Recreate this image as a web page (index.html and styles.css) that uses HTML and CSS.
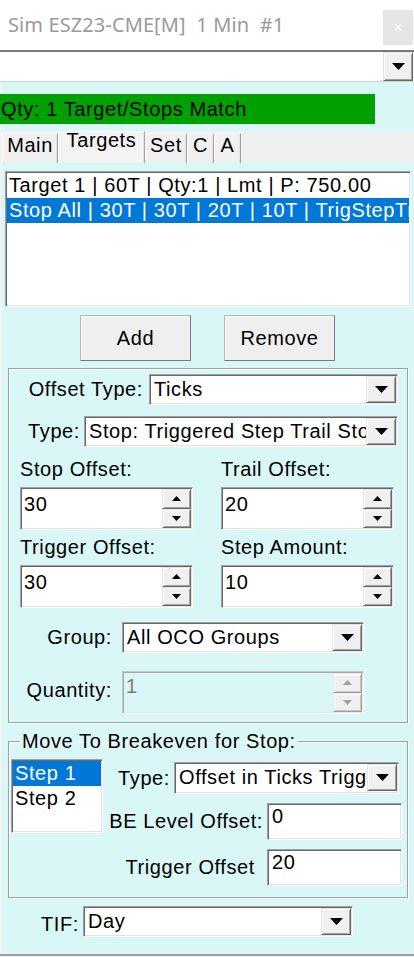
FILE: index.html
```html
<!DOCTYPE html>
<html>
<head>
<meta charset="utf-8">
<link rel="stylesheet" href="styles.css">
</head>
<body>
<div class="titlebar">
  <span class="title">Sim ESZ23-CME[M]&nbsp; 1 Min&nbsp; #1</span>
  <span class="close">×</span>
</div>
<div class="topbar">
  <span class="dd top-dd"><svg width="13" height="7" viewBox="0 0 13 7"><path d="M0 0H13L6.5 7Z"/></svg></span>
</div>
<div class="content">
  <div class="status">Qty: 1 Target/Stops Match</div>
  <div class="tabs">
    <span class="tab w-main">Main</span>
    <span class="tab active w-targets">Targets</span>
    <span class="tab w-set">Set</span>
    <span class="tab w-c">C</span>
    <span class="tab w-a">A</span>
  </div>
  <div class="listbox main-list">
    <div class="item">Target 1 | 60T | Qty:1 | Lmt | P: 750.00</div>
    <div class="item sel">Stop All | 30T | 30T | 20T | 10T | TrigStepTrail</div>
  </div>
  <div class="btnrow">
    <button class="btn btn-add">Add</button>
    <button class="btn btn-remove">Remove</button>
  </div>

  <div class="group g1">
    <div class="row row-offset">
      <span class="lbl lbl-offset">Offset Type:</span>
      <div class="combo c-offset"><span class="combo-val">Ticks</span><span class="dd"><svg width="13" height="7" viewBox="0 0 13 7"><path d="M0 0H13L6.5 7Z"/></svg></span></div>
    </div>
    <div class="row row-type">
      <span class="lbl lbl-type">Type:</span>
      <div class="combo c-type"><span class="combo-val">Stop: Triggered Step Trail Stop</span><span class="dd"><svg width="13" height="7" viewBox="0 0 13 7"><path d="M0 0H13L6.5 7Z"/></svg></span></div>
    </div>
    <div class="grid">
      <div class="cell">
        <div class="cell-lbl">Stop Offset:</div>
        <div class="spin"><span class="spin-val">30</span><span class="spin-btns"><span class="sb"><svg width="9" height="5" viewBox="0 0 9 5"><path d="M0 5H9L4.5 0Z"/></svg></span><span class="sb"><svg width="9" height="5" viewBox="0 0 9 5"><path d="M0 0H9L4.5 5Z"/></svg></span></span></div>
      </div>
      <div class="cell">
        <div class="cell-lbl">Trail Offset:</div>
        <div class="spin"><span class="spin-val">20</span><span class="spin-btns"><span class="sb"><svg width="9" height="5" viewBox="0 0 9 5"><path d="M0 5H9L4.5 0Z"/></svg></span><span class="sb"><svg width="9" height="5" viewBox="0 0 9 5"><path d="M0 0H9L4.5 5Z"/></svg></span></span></div>
      </div>
      <div class="cell">
        <div class="cell-lbl">Trigger Offset:</div>
        <div class="spin"><span class="spin-val">30</span><span class="spin-btns"><span class="sb"><svg width="9" height="5" viewBox="0 0 9 5"><path d="M0 5H9L4.5 0Z"/></svg></span><span class="sb"><svg width="9" height="5" viewBox="0 0 9 5"><path d="M0 0H9L4.5 5Z"/></svg></span></span></div>
      </div>
      <div class="cell">
        <div class="cell-lbl">Step Amount:</div>
        <div class="spin"><span class="spin-val">10</span><span class="spin-btns"><span class="sb"><svg width="9" height="5" viewBox="0 0 9 5"><path d="M0 5H9L4.5 0Z"/></svg></span><span class="sb"><svg width="9" height="5" viewBox="0 0 9 5"><path d="M0 0H9L4.5 5Z"/></svg></span></span></div>
      </div>
    </div>
    <div class="row row-group">
      <span class="lbl lbl-group">Group:</span>
      <div class="combo c-group"><span class="combo-val">All OCO Groups</span><span class="dd"><svg width="13" height="7" viewBox="0 0 13 7"><path d="M0 0H13L6.5 7Z"/></svg></span></div>
    </div>
    <div class="row row-qty">
      <span class="lbl lbl-qty">Quantity:</span>
      <div class="spin disabled c-qty"><span class="spin-val">1</span><span class="spin-btns"><span class="sb"><svg width="9" height="5" viewBox="0 0 9 5"><path d="M0 5H9L4.5 0Z"/></svg></span><span class="sb"><svg width="9" height="5" viewBox="0 0 9 5"><path d="M0 0H9L4.5 5Z"/></svg></span></span></div>
    </div>
  </div>

  <fieldset class="g2">
    <legend>Move To Breakeven for Stop:</legend>
    <div class="g2-body">
      <div class="listbox steps">
        <div class="item sel">Step 1</div>
        <div class="item">Step 2</div>
      </div>
      <div class="g2-right">
        <div class="r2 r2-type">
          <span class="lbl2">Type:</span>
          <div class="combo c-betype"><span class="combo-val">Offset in Ticks Trigger</span><span class="dd"><svg width="13" height="7" viewBox="0 0 13 7"><path d="M0 0H13L6.5 7Z"/></svg></span></div>
        </div>
        <div class="r2 r2-be">
          <span class="lbl2">BE Level Offset:</span>
          <div class="textbox">0</div>
        </div>
        <div class="r2 r2-trig">
          <span class="lbl2">Trigger Offset</span>
          <div class="textbox">20</div>
        </div>
      </div>
    </div>
  </fieldset>

  <div class="row row-tif">
    <span class="lbl lbl-tif">TIF:</span>
    <div class="combo c-tif"><span class="combo-val">Day</span><span class="dd"><svg width="13" height="7" viewBox="0 0 13 7"><path d="M0 0H13L6.5 7Z"/></svg></span></div>
  </div>
</div>
<div class="bottom"></div>
</body>
</html>
```
FILE: styles.css
```css
* { box-sizing: border-box; }
body {
  margin: 0;
  width: 414px;
  height: 957px;
  overflow: hidden;
  font-family: "Liberation Sans", Arial, sans-serif;
  font-size: 20px;
  letter-spacing: 0.6px;
  color: #000;
  background: #daf7f7;
}

/* title */
.titlebar {
  height: 50px;
  background: #fff;
  display: flex;
  justify-content: space-between;
  align-items: flex-start;
  letter-spacing: 0;
}
.title {
  font-family: "Noto Sans", "Open Sans", sans-serif;
  font-size: 20px;
  line-height: 26px;
  color: #9a9a9a;
  padding: 12px 0 0 8px;
  letter-spacing: 0.1px;
}
.close {
  width: 30px;
  height: 35px;
  margin: 10px 1px 0 0;
  background: #e6e6e6;
  color: #fafafa;
  font-family: "Liberation Sans", sans-serif;
  font-size: 16px;
  display: flex;
  align-items: center;
  justify-content: center;
}
.topbar {
  height: 32px;
  background: #fff;
  border-top: 2px solid #7a7a7a;
  border-bottom: 1px solid #d4d4d4;
  display: flex;
  justify-content: flex-end;
}

/* dropdown button */
.dd {
  width: 30px;
  height: 27px;
  flex: none;
  background: #f0f0f0;
  border: 1px solid;
  border-color: #e3e3e3 #696969 #696969 #e3e3e3;
  box-shadow: inset 1px 1px #fff, inset -1px -1px #a0a0a0;
  display: flex;
  align-items: center;
  justify-content: center;
}
.top-dd {
  height: 29px;
  margin-right: 1px;
}

/* content */
.content {
  height: 872px;
  padding-top: 12px;
  border-left: 2px solid #eef3f3;
}
.status {
  margin-left: -2px;
  width: 375px;
  height: 30px;
  line-height: 30px;
  background: #00a000;
  padding-left: 1px;
}
.tabs {
  margin: 7px 0 0 -2px;
  height: 32px;
  background: #f0f0f0;
  display: flex;
  align-items: flex-end;
  padding-left: 2px;
}
.tab {
  height: 30px;
  line-height: 23px;
  text-align: center;
  border-top: 1px solid #fff;
  border-left: 1px solid #fff;
  border-right: 1px solid #a0a0a0;
  box-shadow: inset -1px 0 #e3e3e3;
  white-space: nowrap;
}
.tab.active {
  height: 32px;
  line-height: 16px;
  background: #f3f3f3;
}
.w-main { width: 56px; }
.w-targets { width: 87px; }
.w-set { width: 42px; }
.w-c { width: 27px; }
.w-a { width: 27px; }

/* listbox */
.listbox {
  background: #fff;
  border: 1px solid;
  border-color: #a0a0a0 #fff #fff #a0a0a0;
  box-shadow: inset 1px 1px #696969, inset -1px -1px #e3e3e3;
  padding: 1px;
  overflow: hidden;
}
.item {
  height: 25px;
  line-height: 25px;
  padding-left: 2px;
  white-space: nowrap;
}
.item.sel {
  background: #0078d7;
  color: #fff;
}
.main-list {
  margin: 8px 3px 0 3px;
  height: 136px;
}

/* buttons */
.btnrow {
  margin-top: 8px;
  display: flex;
}
.btn {
  height: 46px;
  font-family: "Liberation Sans", Arial, sans-serif;
  font-size: 20px;
  letter-spacing: 0.6px;
  color: #000;
  background: #efefef;
  border: 1px solid;
  border-color: #b4b4b4 #7a7a7a #7a7a7a #b4b4b4;
  box-shadow: inset 1px 1px #fff;
  padding: 0;
}
.btn-add { width: 111px; margin-left: 78px; }
.btn-remove { width: 111px; margin-left: 33px; }

/* group box 1 */
.group {
  margin: 7px 6px 0 6px;
  border: 1px solid #a0a0a0;
  box-shadow: inset 1px 1px #fff, 1px 1px #fff;
  padding: 5px 0 8px 0;
}
.row {
  display: flex;
  align-items: center;
}
.lbl {
  flex: none;
  text-align: right;
  white-space: nowrap;
  line-height: 23px;
}
.combo {
  display: flex;
  height: 31px;
  background: #fff;
  border: 1px solid;
  border-color: #a0a0a0 #fff #fff #a0a0a0;
  box-shadow: inset 1px 1px #696969, inset -1px -1px #e3e3e3;
  padding: 1px;
}
.combo-val {
  flex: 1;
  min-width: 0;
  overflow: hidden;
  white-space: nowrap;
  line-height: 23px;
  padding: 2px 0 0 3px;
}
.row-offset { height: 31px; }
.lbl-offset { width: 140px; padding-right: 6px; }
.c-offset { width: 249px; }
.row-type { height: 31px; margin-top: 11px; }
.lbl-type { width: 75px; padding-right: 4px; }
.c-type { width: 314px; }

.grid {
  margin: 11px 0 0 11px;
  display: grid;
  grid-template-columns: 173px 173px;
  column-gap: 28px;
  row-gap: 6px;
}
.cell-lbl {
  line-height: 23px;
  height: 23px;
  white-space: nowrap;
}
.spin {
  margin-top: 6px;
  display: flex;
  height: 43px;
  background: #fff;
  border: 1px solid;
  border-color: #a0a0a0 #fff #fff #a0a0a0;
  box-shadow: inset 1px 1px #696969, inset -1px -1px #e3e3e3;
  padding: 1px 1px 1px 1px;
}
.spin-val {
  flex: 1;
  line-height: 23px;
  padding: 4px 0 0 2px;
}
.spin-btns {
  width: 29px;
  display: flex;
  flex-direction: column;
  justify-content: space-between;
}
.sb {
  height: 20px;
  background: #f0f0f0;
  border: 1px solid;
  border-color: #e3e3e3 #696969 #696969 #e3e3e3;
  box-shadow: inset 1px 1px #fff, inset -1px -1px #a0a0a0;
  display: flex;
  align-items: center;
  justify-content: center;
}
.spin.disabled {
  background: #daf7f7;
  border-color: #c8c8c8 #fff #fff #c8c8c8;
  box-shadow: inset 1px 1px #a8a8a8, inset -1px -1px #e8e8e8;
}
.spin.disabled .spin-val { color: #7a7a7a; padding-top: 2px; }
.spin.disabled .sb svg { fill: #a0a0a0; }
.spin.disabled .sb {
  border-color: #e8e8e8 #a0a0a0 #a0a0a0 #e8e8e8;
  box-shadow: inset 1px 1px #fff, inset -1px -1px #c8c8c8;
}

.row-group { height: 31px; margin-top: 14px; }
.lbl-group { width: 113px; padding-right: 10px; }
.c-group { width: 242px; }
.row-qty { margin-top: 18px; align-items: flex-start; }
.lbl-qty { width: 113px; padding-right: 10px; margin-top: 8px; }
.c-qty { width: 242px; margin-top: 0; }

/* group box 2 */
.g2 {
  margin: 7px 6px 0 6px;
  padding: 6px 5px 11px 2px;
  border: 1px solid #a0a0a0;
  box-shadow: inset 1px 1px #fff, 1px 1px #fff;
  min-width: 0;
}
.g2 legend {
  margin-left: 9px;
  padding: 0 2px;
  line-height: 23px;
}
.g2-body {
  display: flex;
  align-items: flex-start;
}
.steps {
  width: 92px;
  height: 74px;
  flex: none;
}
.g2-right {
  flex: 1;
  margin-top: 3px;
  display: flex;
  flex-direction: column;
  align-items: flex-end;
}
.r2 {
  display: flex;
  align-items: center;
}
.lbl2 {
  line-height: 23px;
  white-space: nowrap;
}
.r2-type { margin-right: 3px; }
.r2-type .lbl2 { margin-right: 4px; }
.c-betype { width: 225px; height: 32px; }
.r2-be { margin-top: 9px; }
.r2-be .lbl2 { margin-right: 4px; }
.r2-trig { margin-top: 9px; }
.r2-trig .lbl2 { margin-right: 12px; }
.textbox {
  width: 135px;
  height: 37px;
  background: #fff;
  border: 1px solid;
  border-color: #a0a0a0 #fff #fff #a0a0a0;
  box-shadow: inset 1px 1px #696969, inset -1px -1px #e3e3e3;
  line-height: 23px;
  padding: 1px 0 0 4px;
}

/* TIF */
.row-tif {
  margin-top: 8px;
  align-items: flex-start;
}
.lbl-tif { width: 81px; padding-right: 4px; margin-top: 7px; }
.c-tif { width: 270px; height: 31px; }

.bottom {
  height: 3px;
  border-top: 2px solid #a0a0a0;
  background: #f0f0f0;
}
```
